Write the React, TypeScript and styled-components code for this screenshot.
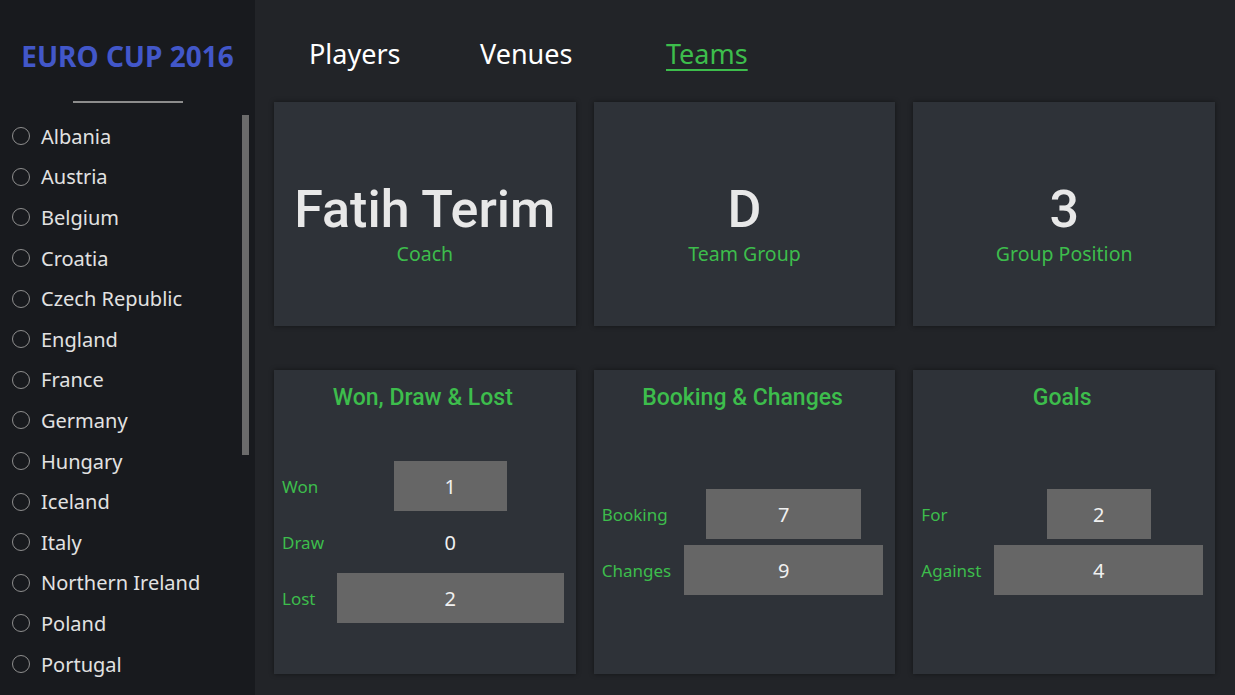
import React from "react";
import styled, { createGlobalStyle } from "styled-components";

const GREEN = "#3dbd4c";

const GlobalStyle = createGlobalStyle`
  html, body { margin: 0; padding: 0; background: #222428; }
  body { font-family: "Noto Sans", "Open Sans", sans-serif; }
  * { box-sizing: border-box; }
`;

const Page = styled.div`
  display: flex;
  width: 100vw;
  height: 100vh;
  overflow: hidden;
`;

const Sidebar = styled.aside`
  width: 255px;
  flex-shrink: 0;
  background: #181a1e;
  display: flex;
  flex-direction: column;
  min-height: 0;
`;

const Brand = styled.h1`
  margin: 36px 0 0;
  text-align: center;
  font-size: 28px;
  line-height: 40px;
  font-weight: 700;
  color: #4257c9;
`;

const Divider = styled.hr`
  width: 110px;
  height: 2px;
  border: 0;
  background: #8c8c8c;
  margin: 25px auto 13px;
`;

const ListViewport = styled.div`
  position: relative;
  flex: 1;
  min-height: 0;
`;

const CountryList = styled.ul`
  list-style: none;
  margin: 0;
  padding: 0;
  height: 100%;
  overflow-y: scroll;
  scrollbar-width: none;
  &::-webkit-scrollbar { display: none; }
`;

const ScrollThumb = styled.div`
  position: absolute;
  top: -1px;
  right: 6px;
  width: 7px;
  height: 340px;
  background: #6b6b6b;
`;

const CountryRow = styled.li`
  height: 40.6px;
  display: flex;
  align-items: center;
  gap: 11px;
  padding-left: 12px;
  font-size: 20px;
  color: #e2e2e2;
  white-space: nowrap;
`;

const Radio = styled.span`
  width: 18px;
  height: 18px;
  border-radius: 50%;
  border: 1.5px solid #8e8e8e;
  flex-shrink: 0;
`;

const Main = styled.main`
  flex: 1;
  display: flex;
  flex-direction: column;
  padding: 0 20px 21px 19px;
  min-width: 0;
`;

const Nav = styled.nav`
  height: 102px;
  flex-shrink: 0;
  display: grid;
  grid-template-columns: 171px 186px auto;
  align-items: center;
  padding: 6px 0 0 35px;
`;

const NavLink = styled.a<{ $active?: boolean }>`
  font-size: 27px;
  line-height: 1.2;
  color: ${(p) => (p.$active ? GREEN : "#ffffff")};
  text-decoration: ${(p) => (p.$active ? "underline" : "none")};
  text-decoration-thickness: 2px;
  text-underline-offset: 5px;
  cursor: pointer;
`;

const CardGrid = styled.section`
  flex: 1;
  display: grid;
  grid-template-columns: repeat(3, 1fr);
  grid-template-rows: 224px 304px;
  column-gap: 18px;
  row-gap: 44px;
`;

const Card = styled.div`
  background: #2e3238;
  box-shadow: 0 0 5px rgba(0, 0, 0, 0.45);
  display: flex;
  flex-direction: column;
`;

const StatCard = styled(Card)`
  align-items: center;
  justify-content: center;
  padding-top: 20px;
`;

const BigValue = styled.div`
  font-family: Roboto, "Noto Sans", sans-serif;
  font-size: 52px;
  font-weight: 500;
  line-height: 60px;
  color: #e8e8e8;
`;

const StatLabel = styled.div`
  font-size: 19.5px;
  line-height: 28px;
  color: ${GREEN};
`;

const ChartCard = styled(Card)`
  padding: 13px 12px 3px 8px;
`;

const ChartTitle = styled.h2`
  margin: 0;
  font-family: Roboto, "Noto Sans", sans-serif;
  font-size: 23px;
  font-weight: 500;
  line-height: 30px;
  text-align: center;
  color: ${GREEN};
`;

const ChartGrid = styled.div`
  flex: 1;
  display: grid;
  grid-template-columns: auto 1fr;
  column-gap: 13px;
  row-gap: 6px;
  align-content: center;
`;

const RowLabel = styled.div`
  font-size: 17px;
  color: ${GREEN};
  align-self: center;
  white-space: nowrap;
`;

const BarCell = styled.div`
  height: 50px;
  display: flex;
  justify-content: center;
`;

const Bar = styled.div`
  height: 100%;
  background: #666666;
  display: flex;
  align-items: center;
  justify-content: center;
  font-size: 20px;
  color: #f0f0f0;
  white-space: nowrap;
`;

const countries = [
  "Albania", "Austria", "Belgium", "Croatia", "Czech Republic", "England",
  "France", "Germany", "Hungary", "Iceland", "Italy", "Northern Ireland",
  "Poland", "Portugal", "Republic of Ireland", "Romania", "Russia",
  "Slovakia", "Spain", "Sweden", "Switzerland", "Turkey", "Ukraine", "Wales",
];

const stats = [
  { value: "Fatih Terim", label: "Coach" },
  { value: "D", label: "Team Group" },
  { value: "3", label: "Group Position" },
];

const charts = [
  { title: "Won, Draw & Lost", rows: [["Won", 1], ["Draw", 0], ["Lost", 2]] },
  { title: "Booking & Changes", rows: [["Booking", 7], ["Changes", 9]] },
  { title: "Goals", rows: [["For", 2], ["Against", 4]] },
] as { title: string; rows: [string, number][] }[];

export default function App() {
  return (
    <Page>
      <GlobalStyle />
      <Sidebar>
        <Brand>EURO CUP 2016</Brand>
        <Divider />
        <ListViewport>
          <CountryList>
            {countries.map((c) => (
              <CountryRow key={c}>
                <Radio />
                {c}
              </CountryRow>
            ))}
          </CountryList>
          <ScrollThumb />
        </ListViewport>
      </Sidebar>
      <Main>
        <Nav>
          <NavLink>Players</NavLink>
          <NavLink>Venues</NavLink>
          <NavLink $active>Teams</NavLink>
        </Nav>
        <CardGrid>
          {stats.map((s) => (
            <StatCard key={s.label}>
              <BigValue>{s.value}</BigValue>
              <StatLabel>{s.label}</StatLabel>
            </StatCard>
          ))}
          {charts.map((ch) => {
            const max = Math.max(...ch.rows.map((r) => r[1]));
            return (
              <ChartCard key={ch.title}>
                <ChartTitle>{ch.title}</ChartTitle>
                <ChartGrid>
                  {ch.rows.map(([label, v]) => (
                    <React.Fragment key={label}>
                      <RowLabel>{label}</RowLabel>
                      <BarCell>
                        <Bar style={{ width: `${(v / max) * 100}%` }}>{v}</Bar>
                      </BarCell>
                    </React.Fragment>
                  ))}
                </ChartGrid>
              </ChartCard>
            );
          })}
        </CardGrid>
      </Main>
    </Page>
  );
}
